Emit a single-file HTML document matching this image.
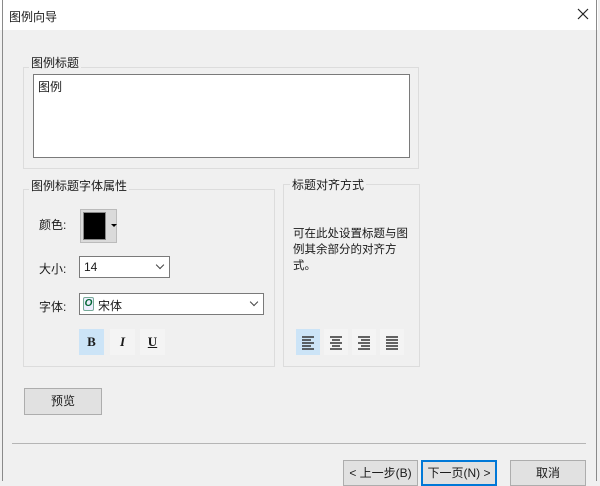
<!DOCTYPE html>
<html><head><meta charset="utf-8"><style>
*{box-sizing:border-box;margin:0;padding:0}
body{width:600px;height:481px;overflow:hidden;background:#f0f0f0;font-family:"Liberation Sans","Noto Sans CJK SC",sans-serif;font-size:12px;color:#1a1a1a;position:relative}
.a{position:absolute}
.grp{position:absolute;border:1px solid #dcdcdc}
.lbl{position:absolute;background:#f0f0f0;padding:0 2px;font-size:12px;line-height:14px}
.btn{position:absolute;background:#e1e1e1;border:1px solid #adadad;text-align:center;font-size:12px}
.combo{position:absolute;background:#fff;border:1px solid #7a7a7a}
.chev{position:absolute;width:6px;height:6px;border-right:1px solid #444;border-bottom:1px solid #444;transform:rotate(45deg)}
.tb{position:absolute;width:25px;height:26px;text-align:center;line-height:26px;font-family:"Liberation Serif",serif;font-weight:bold;font-size:13px}
.al{position:absolute;width:24px;height:26px}
</style></head><body>
<div class="a" style="left:0;top:0;width:598px;height:30px;background:#fff"></div>
<div class="a" style="left:2px;top:0;width:1px;height:481px;background:#8a8a8a"></div>
<div class="a" style="left:596px;top:0;width:1px;height:481px;background:#8a8a8a"></div>
<div class="a" style="left:9px;top:8px;font-size:12px">图例向导</div>
<svg class="a" style="left:577px;top:8px" width="12" height="12"><path d="M1 1L11 11M11 1L1 11" stroke="#222" stroke-width="1.2"/></svg>

<div class="grp" style="left:23px;top:67px;width:396px;height:102px"></div>
<div class="lbl" style="left:29px;top:56px">图例标题</div>
<div class="a" style="left:33px;top:74px;width:377px;height:84px;background:#fff;border:1px solid #7a7a7a;padding:3px 4px">图例</div>

<div class="grp" style="left:23px;top:189px;width:252px;height:178px"></div>
<div class="lbl" style="left:29px;top:179px">图例标题字体属性</div>
<div class="a" style="left:39px;top:216px">颜色:</div>
<div class="a" style="left:80px;top:209px;width:37px;height:34px;background:#dadada;border:1px solid #bbb"></div>
<div class="a" style="left:83px;top:212px;width:23px;height:28px;background:#000;border:1px solid #888"></div>
<div class="a" style="left:111px;top:224px;border:3px solid transparent;border-top:3px solid #000"></div>
<div class="a" style="left:39px;top:260px">大小:</div>
<div class="combo" style="left:79px;top:256px;width:91px;height:22px"><span class="a" style="left:4px;top:3px">14</span><div class="chev" style="left:77px;top:5px"></div></div>
<div class="a" style="left:39px;top:298px">字体:</div>
<div class="combo" style="left:79px;top:293px;width:185px;height:22px"><span class="a" style="left:3px;top:3px;width:11px;height:14px;border:1px solid #7a9;border-radius:2px;background:#eef;color:#063;font-size:10px;line-height:12px;text-align:center;font-style:italic;font-weight:bold">O</span><span class="a" style="left:18px;top:3px">宋体</span><div class="chev" style="left:171px;top:5px"></div></div>
<div class="tb" style="left:79px;top:329px;background:#cce4f7">B</div>
<div class="tb" style="left:110px;top:329px;font-style:italic;background:#f4f4f4">I</div>
<div class="tb" style="left:140px;top:329px;text-decoration:underline;background:#f4f4f4">U</div>

<div class="grp" style="left:283px;top:184px;width:137px;height:183px"></div>
<div class="lbl" style="left:290px;top:178px">标题对齐方式</div>
<div class="a" style="left:293px;top:226px;width:120px;line-height:16px;font-size:11.5px">可在此处设置标题与图例其余部分的对齐方式。</div>
<div class="al" style="left:296px;top:329px;background:#cce4f7"><svg width="24" height="26"><path d="M6 8h12M6 11h9M6 14h12M6 17h9M6 20h12" stroke="#333" stroke-width="1.5"/></svg></div>
<div class="al" style="left:324px;top:329px;background:#f4f4f4"><svg width="24" height="26"><path d="M6 8h12M8 11h8M6 14h12M8 17h8M6 20h12" stroke="#333" stroke-width="1.5"/></svg></div>
<div class="al" style="left:352px;top:329px;background:#f4f4f4"><svg width="24" height="26"><path d="M6 8h12M9 11h9M6 14h12M9 17h9M6 20h12" stroke="#333" stroke-width="1.5"/></svg></div>
<div class="al" style="left:380px;top:329px;background:#f4f4f4"><svg width="24" height="26"><path d="M6 8h12M6 11h12M6 14h12M6 17h12M6 20h12" stroke="#333" stroke-width="1.5"/></svg></div>

<div class="btn" style="left:24px;top:388px;width:78px;height:27px;line-height:25px">预览</div>
<div class="a" style="left:12px;top:443px;width:574px;height:1px;background:#b5b5b5"></div>
<div class="btn" style="left:343px;top:460px;width:75px;height:26px;line-height:24px">&lt; 上一步(B)</div>
<div class="btn" style="left:421px;top:460px;width:76px;height:26px;line-height:22px;border:2px solid #0078d7">下一页(N) &gt;</div>
<div class="btn" style="left:510px;top:460px;width:76px;height:26px;line-height:24px">取消</div>
</body></html>
